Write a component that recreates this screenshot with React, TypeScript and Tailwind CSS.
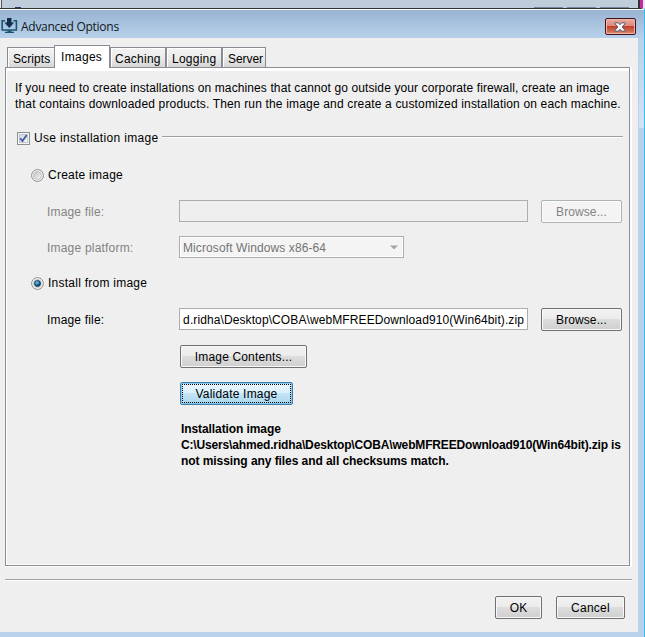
import clsx from "clsx";
import { ReactNode, useState } from "react";

interface ButtonProps {
  children: ReactNode;
  className?: string;
  disabled?: boolean;
  focused?: boolean;
}

const tabs = [
  { name: "Scripts", className: "w-[47px] pl-[5px] tracking-[0.1px]" },
  { name: "Images", className: "w-[56px] pl-[6px] tracking-[0.3px]" },
  { name: "Caching", className: "w-[56px] pl-[4px] tracking-[0.25px]" },
  { name: "Logging", className: "w-[56px] pl-[5px] tracking-[0.25px]" },
  { name: "Server", className: "w-[44px] pl-[5px] tracking-[-0.05px]" },
];

const Button: React.FC<ButtonProps> = ({ children, className, disabled, focused }) => {
  return (
    <button
      disabled={disabled}
      className={clsx(
        "relative h-[23px] shrink-0 rounded-[2px] border pt-px text-center leading-[21px] whitespace-nowrap",
        disabled && "border-[#adb2b5] bg-[#f4f4f4] text-[#838383] shadow-[inset_0_0_0_1px_#fcfcfc]",
        focused && "border-[#3c7fb1] bg-[linear-gradient(#eaf6fd_0%,#d9f0fc_49%,#c4e5f6_50%,#a9d6ec_100%)] shadow-[inset_0_0_0_1px_#8ccbe8]",
        !disabled && !focused && "border-[#707070] bg-[linear-gradient(#f2f2f2_0%,#ebebeb_49%,#dddddd_50%,#cfcfcf_100%)] shadow-[inset_0_0_0_1px_#f8f8f8]",
        className
      )}
    >
      {children}
      {focused && <span className="absolute inset-[1px] border border-dotted border-black" />}
    </button>
  );
};

const Radio = ({ checked }: { checked: boolean }) => (
  <svg width="13" height="13" viewBox="0 0 13 13" className="mr-[4px] shrink-0">
    <defs>
      <linearGradient id="ring" x1="0" y1="0" x2="1" y2="1">
        <stop offset="0" stopColor="#bfc3c7" />
        <stop offset="1" stopColor="#f5f5f5" />
      </linearGradient>
      <radialGradient id="dot" cx="0.4" cy="0.35" r="0.65">
        <stop offset="0" stopColor="#7fd6f5" />
        <stop offset="0.45" stopColor="#2686b6" />
        <stop offset="1" stopColor="#0b2f50" />
      </radialGradient>
    </defs>
    <circle cx="6.5" cy="6.5" r="5.9" fill="#f7f7f7" stroke="#8b8d8f" strokeWidth="1" />
    <circle cx="6.5" cy="6.5" r="4" fill="url(#ring)" stroke="#b7babd" strokeWidth="0.8" />
    {checked && <circle cx="6.5" cy="6.5" r="3" fill="url(#dot)" stroke="#173a5b" strokeWidth="0.8" />}
  </svg>
);

const DownloadIcon = () => (
  <svg width="17" height="16" viewBox="0 0 17 16" className="shrink-0">
    <path d="M4 2.7H1.2V12h14.2V2.7H12.5" fill="none" stroke="#1b5472" strokeWidth="1.6" />
    <path d="M6.5 12.5h4v1.2h2.5v1.3H4v-1.3h2.5z" fill="#1b5472" />
    <path d="M6 0h4.5v4.5h2.7L8.3 10 3.4 4.5H6z" fill="#12304e" />
  </svg>
);

const CloseButton = () => (
  <div className="flex h-[17px] w-[31px] items-center justify-center rounded-[2px] border border-[#431322] bg-[linear-gradient(#e9aaa0_0%,#dc8a7d_46%,#c0422c_50%,#cf6a50_80%,#df9078_100%)] shadow-[inset_0_0_0_1px_#eeb5a9]">
    <svg width="12" height="10" viewBox="0 0 12 10" className="-ml-px">
      <path d="M1 .8h3.3L6 2.7 7.7.8H11v1L8.2 5 11 8.2v1H7.7L6 7.3 4.3 9.2H1v-1L3.8 5 1 1.8z" fill="#f5f5f5" stroke="#515a70" strokeWidth="1" />
    </svg>
  </div>
);

const App = () => {
  const [activeTab, setActiveTab] = useState("Images");

  return (
    <div className="flex h-[637px] w-[645px] flex-col overflow-hidden bg-[#b9d1ea] font-['Liberation_Sans',Arial,sans-serif] text-[12px] text-black">
      {/* edge of the parent window */}
      <div className="flex h-[8px] shrink-0 items-end bg-[#bfcddb]">
        <div className="h-full w-[2px] border-r border-[#555] bg-[#e5e9ed]" />
        <div className="ml-[13px] h-px w-[6px] bg-[#203d66]" />
        <div className="ml-auto flex h-px gap-[4px]">
          <div className="w-[29px] bg-[#7485a4]" />
          <div className="w-[29px] bg-[#7485a4]" />
          <div className="w-[29px] bg-[#7485a4]" />
        </div>
        <div className="ml-[9px] h-full w-[2px] bg-[#333]" />
        <div className="h-full w-[3px] bg-[#c52b9b]" />
        <div className="h-full w-[2px] bg-[#e8e3ee]" />
      </div>

      <div className="flex h-[629px] rounded-tr-[5px] border-t border-[#303338]">
        <div className="flex w-[638px] flex-col">
          <div className="-mr-[6px] flex h-[29px] shrink-0 items-center border-t border-white bg-linear-to-b from-[#98b4d2] to-[#b8d1ea] pr-[8px] pl-[1px]">
            <div className="mt-[3px]">
              <DownloadIcon />
            </div>
            <span className="mt-[6px] ml-[3px] font-['Open_Sans','Noto_Sans',sans-serif] text-[12px] leading-[22px] tracking-[-0.27px] text-[#101820]">
              Advanced Options
            </span>
            <div className="mt-[5px] ml-auto">
              <CloseButton />
            </div>
          </div>

          <div className="flex h-[594px] flex-col bg-[#efefef]">
            <div className="flex h-[29px] shrink-0 items-end pl-[7px]">
              {tabs.map((tab) => {
                const active = tab.name === activeTab;
                return (
                  <button
                    key={tab.name}
                    onClick={() => setActiveTab(tab.name)}
                    className={clsx(
                      "shrink-0 border-t border-l border-[#898c95] text-left leading-[22px] whitespace-nowrap",
                      active
                        ? "z-10 -mb-px h-[23px] border-r bg-white"
                        : "h-[20px] bg-linear-to-b from-[#f3f3f3] via-[#ebebeb] via-50% to-[#d6d6d6] shadow-[inset_1px_1px_0_#fff]",
                      !active && tab.name !== "Scripts" && "border-r",
                      tab.className
                    )}
                  >
                    {tab.name}
                  </button>
                );
              })}
            </div>

            <div className="ml-[5px] w-[627px] border-r-2 border-b border-white">
              <div className="h-[499px] border border-[#898c95] shadow-[inset_1px_-1px_0_#fff,inset_0_3px_0_#fff]">
                <div className="pt-[12px] pl-[9px] leading-[16px] whitespace-nowrap">
                  <p className="tracking-[0.11px]">If you need to create installations on machines that cannot go outside your corporate firewall, create an image</p>
                  <p className="tracking-[0.165px]">that contains downloaded products. Then run the image and create a customized installation on each machine.</p>
                </div>

                <div className="mt-[16px] flex h-[20px] items-center pr-[6px] pl-[11px]">
                  <div className="flex h-[13px] w-[13px] items-center justify-center border border-[#8e8f8f] bg-[#f4f4f4]">
                    <div className="flex h-[9px] w-[9px] items-center justify-center border border-[#c2c7ce] bg-linear-to-br from-[#d2d7df] to-[#f5f6f7]">
                      <svg width="9" height="9" viewBox="0 0 9 9" className="shrink-0">
                        <path d="M1.2 4.2 3.5 7 7.7 1" fill="none" stroke="#4058a0" strokeWidth="1.8" />
                      </svg>
                    </div>
                  </div>
                  <span className="ml-[4px] w-[124px] tracking-[0.32px] whitespace-nowrap">Use installation image</span>
                  <div className="-mt-[2px] ml-[4px] h-[2px] flex-1 border-t border-b border-t-[#a0a0a0] border-b-white" />
                </div>

                <div className="mt-[17px] flex h-[20px] items-center pl-[25px]">
                  <Radio checked={false} />
                  <span className="tracking-[0.25px]">Create image</span>
                </div>

                <div className="mt-[15px] flex pl-[41px]">
                  <span className="w-[132px] pt-px leading-[22px] tracking-[0.17px] text-[#838383]">Image file:</span>
                  <div className="h-[22px] w-[349px] border border-[#abadb3]" />
                  <Button disabled className="ml-[13px] w-[81px] tracking-[0.1px]">Browse...</Button>
                </div>

                <div className="mt-[13px] flex pl-[41px]">
                  <span className="w-[132px] pt-px leading-[22px] tracking-[0.2px] text-[#838383]">Image platform:</span>
                  <div className="flex h-[22px] w-[225px] items-center justify-between border border-[#abadb3] bg-[#f4f4f4] pr-[5px] pl-[3px] text-[#747474] shadow-[inset_0_0_0_1px_#fff]">
                    <span className="pt-[2px] tracking-[0.1px]">Microsoft Windows x86-64</span>
                    <svg width="8" height="5" viewBox="0 0 8 5">
                      <path d="M0 .5h8L4 4.5z" fill="#a5a5a5" />
                    </svg>
                  </div>
                </div>

                <div className="mt-[14px] flex h-[20px] items-center pl-[25px]">
                  <Radio checked />
                  <span className="tracking-[0.25px]">Install from image</span>
                </div>

                <div className="mt-[15px] flex pl-[41px]">
                  <span className="w-[132px] pt-px leading-[22px] tracking-[0.17px]">Image file:</span>
                  <div className="flex h-[22px] w-[349px] items-center justify-end border border-[#abadb3] bg-white pr-[3px] whitespace-nowrap">
                    <span className="pt-[2px] tracking-[0.1px]">d.ridha\Desktop\COBA\webMFREEDownload910(Win64bit).zip</span>
                  </div>
                  <Button className="ml-[13px] w-[81px] tracking-[0.1px]">Browse...</Button>
                </div>

                <div className="flex flex-col items-start pl-[174px]">
                  <Button className="mt-[14px] w-[127px] tracking-[0.15px]">Image Contents...</Button>
                  <Button focused className="mt-[14px] w-[113px] tracking-[0.2px]">Validate Image</Button>
                  <div className="mt-[16px] pl-px leading-[16px] font-bold whitespace-nowrap">
                    <p className="tracking-[-0.09px]">Installation image</p>
                    <p className="tracking-[-0.155px]">C:\Users\ahmed.ridha\Desktop\COBA\webMFREEDownload910(Win64bit).zip is</p>
                    <p className="tracking-[-0.065px]">not missing any files and all checksums match.</p>
                  </div>
                </div>
              </div>
            </div>

            <div className="mt-[12px] ml-[5px] h-[2px] w-[627px] border-t border-b border-t-[#a0a0a0] border-b-white" />
            <div className="mt-[15px] flex justify-end gap-[14px] pr-[13px]">
              <Button className="w-[47px]">OK</Button>
              <Button className="w-[69px] tracking-[0.25px]">Cancel</Button>
            </div>
          </div>
        </div>
        <div className="w-[6px]">
          <div className="mt-[29px] ml-px h-[90px] bg-linear-to-b from-[#b8d1ea] to-[#d3e3f5]" />
        </div>
        <div className="w-px bg-[#32bfe9]" />
      </div>
    </div>
  );
};

export default App;
